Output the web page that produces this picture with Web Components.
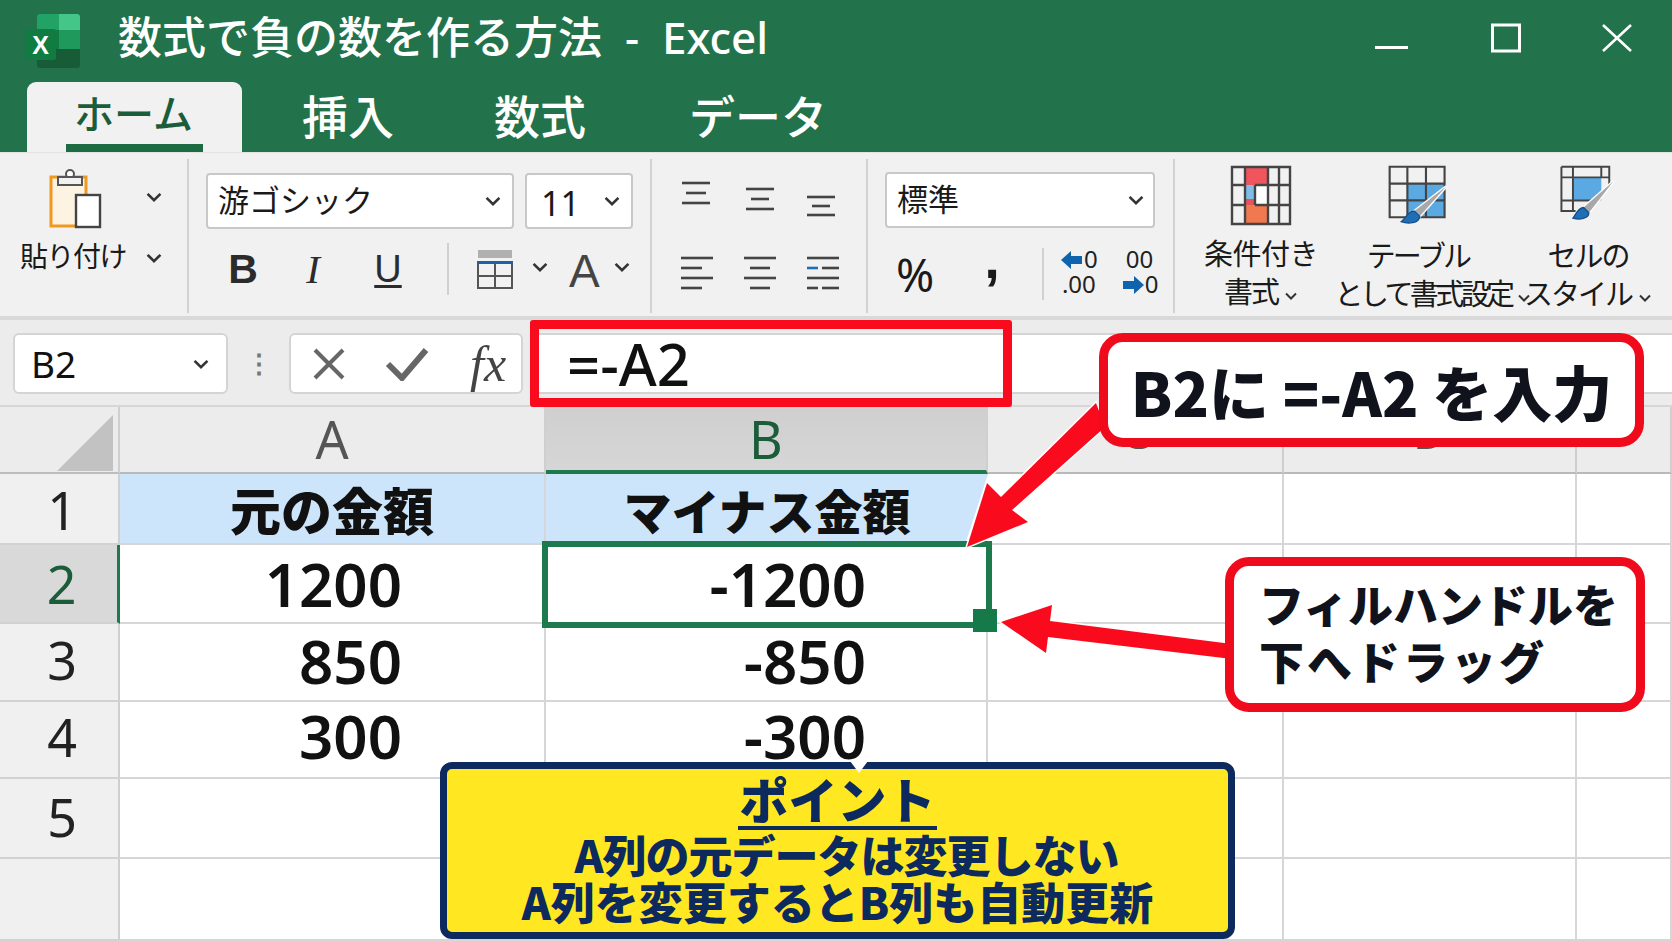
<!DOCTYPE html>
<html lang="ja">
<head>
<meta charset="utf-8">
<title>Excel</title>
<style>
  html, body { margin: 0; height: 100%; overflow: hidden; background: #fff; }
  body { font-family: "Noto Sans", "Noto Sans CJK JP", sans-serif; color: #111; }
</style>
</head>
<body>
<excel-app>
  <title-bar slot="top">数式で負の数を作る方法  -  Excel</title-bar>
  <ribbon-tabs slot="top"></ribbon-tabs>
  <ribbon-panel slot="top"></ribbon-panel>
  <formula-bar slot="top"></formula-bar>
  <sheet-grid slot="top"></sheet-grid>

  <red-arrows></red-arrows>
  <formula-mark></formula-mark>
  <call-out style="left:1099px;top:333px;width:545px;height:114px;font-size:60px;justify-content:center">B2に =-A2 を入力</call-out>
  <call-out style="left:1225px;top:557px;width:420px;height:155px;font-size:45px;padding:0 0 5px 25px;line-height:57px">フィルハンドルを<br><span style="letter-spacing:3px">下へドラッグ</span></call-out>
  <point-box>
    <span slot="head">ポイント</span>
    <span style="letter-spacing:-1px;margin-left:18px">A列の元データは変更しない</span><br>A列を変更するとB列も自動更新
  </point-box>
</excel-app>

<script>
const JP = '"Noto Sans CJK JP", sans-serif';
const LATIN_JP = '"Noto Sans", "Noto Sans CJK JP", sans-serif';

const chevron = (size = 14) => `<svg width="${size}" height="${size}" viewBox="0 0 14 14" fill="none" stroke="#333" stroke-width="2"><polyline points="2 4.5 7 9.5 12 4.5"/></svg>`;

// small blue arrow of the decimal buttons
const decArrow = dir => `<svg width="24" height="20" viewBox="0 0 24 20" fill="#0f62ac" style="vertical-align:-2px"><path d="${dir === 'left' ? 'M1 10 11 1v5h11v8H11v5z' : 'M23 10 13 1v5H2v8h11v5z'}"/></svg>`;

// three or four strokes used by the alignment buttons
function alignIcon(lines) {
  const body = lines.map(l => `<line x1="${l[0]}" x2="${l[1]}" y1="${l[2]}" y2="${l[2]}" stroke="${l[3] || '#444'}"/>`).join('');
  return `<svg width="34" height="34" viewBox="0 0 34 34" stroke-width="2.6">${body}</svg>`;
}

class ExcelApp extends HTMLElement {
  constructor() {
    super();
    this.attachShadow({ mode: 'open' });
    this.shadowRoot.innerHTML = `
      <style>
        :host { display: block; position: relative; width: 1672px; height: 941px; overflow: hidden; background: #fff; }
        .stack { display: flex; flex-direction: column; height: 100%; }
      </style>
      <div class="stack"><slot name="top"></slot></div>
      <slot></slot>
    `;
  }
}

class TitleBar extends HTMLElement {
  constructor() {
    super();
    this.attachShadow({ mode: 'open' });
    this.shadowRoot.innerHTML = `
      <style>
        :host { display: flex; align-items: center; height: 82px; background: #22734b; color: #fff; flex: none; }
        .logo { margin-left: 25px; width: 55px; height: 54px; flex: none; }
        .logo text { font: 700 25px "Liberation Sans", sans-serif; }
        .name { margin-left: 38px; font: 500 44px/1 ${LATIN_JP}; white-space: pre; padding-bottom: 8px; }
        .win { margin-left: auto; display: flex; align-items: center; padding-right: 40px; padding-bottom: 6px; }
        .win svg { display: block; }
      </style>
      <svg class="logo" viewBox="0 0 55 54">
        <path d="M16 0h36a3 3 0 0 1 3 3v13H34V0z" fill="#43c688"/>
        <path d="M15 0h19v16H12V3a3 3 0 0 1 3-3z" fill="#21a366"/>
        <rect x="12" y="16" width="22" height="19" fill="#107c41"/>
        <rect x="34" y="16" width="21" height="19" fill="#1f9a5c"/>
        <path d="M12 35h43v16a3 3 0 0 1-3 3H15a3 3 0 0 1-3-3z" fill="#185c37"/>
        <rect x="0" y="15" width="31" height="31" rx="2" fill="#107c41"/>
        <text x="15.5" y="40" fill="#fff" text-anchor="middle">X</text>
      </svg>
      <span class="name"><slot></slot></span>
      <div class="win">
        <svg width="33" height="4" style="margin-top:20px"><rect width="33" height="3" fill="#fff"/></svg>
        <svg width="30" height="30" style="margin-left:83px" fill="none" stroke="#fff" stroke-width="3"><rect x="1.5" y="2" width="27" height="26"/></svg>
        <svg width="30" height="30" style="margin-left:81px" fill="none" stroke="#fff" stroke-width="2.6"><path d="M1 2 29 28M29 2 1 28"/></svg>
      </div>
    `;
  }
}

class RibbonTabs extends HTMLElement {
  constructor() {
    super();
    this.attachShadow({ mode: 'open' });
    this.shadowRoot.innerHTML = `
      <style>
        :host { display: flex; height: 70px; background: #22734b; flex: none; padding-left: 27px; }
        .tab { font: 500 46px/1 ${JP}; color: #fff; padding-top: 9px; white-space: nowrap; }
        .on {
          width: 215px; height: 70px; box-sizing: border-box; background: #f1f1f1; color: #1b5c3a;
          border-radius: 9px 9px 0 0; text-align: center; position: relative;
          font-size: 40px; padding-right: 2px; padding-top: 10px;
        }
        .on::after { content: ""; position: absolute; left: 39px; bottom: 0; width: 137px; height: 8px; background: #1c6b43; }
      </style>
      <div class="tab on">ホーム</div>
      <div class="tab" style="margin-left:60px">挿入</div>
      <div class="tab" style="margin-left:100px">数式</div>
      <div class="tab" style="margin-left:103px">データ</div>
    `;
  }
}

class RibbonPanel extends HTMLElement {
  constructor() {
    super();
    this.attachShadow({ mode: 'open' });
    this.shadowRoot.innerHTML = `
      <style>
        :host { display: flex; height: 168px; box-sizing: border-box; background: #f1f1f1; border-bottom: 4px solid #d9d9d9; border-top: 1px solid #e3e3e3; padding: 6px 0 3px; flex: none; color: #1a1a1a; font-family: ${JP}; }
        .group { border-right: 2px solid #d2d2d2; box-sizing: border-box; flex: none; height: 100%; }
        .clip { width: 189px; display: grid; grid-template-columns: 142px 1fr; grid-template-rows: 75px 50px; padding-top: 9px; }
        .clip .ic { padding-left: 49px; }
        .clip .lab { font-size: 28px; line-height: 50px; padding-left: 20px; white-space: nowrap; margin-top: -13px; letter-spacing: -1.5px; }
        .clip .ch { padding: 19px 0 0 3px; }
        .clip .ch.b { padding-top: 0; margin-top: -12px; }
        .font { width: 463px; padding: 14px 0 0 17px; }
        .row { display: flex; align-items: center; }
        .box { display: flex; align-items: center; justify-content: space-between; background: #fff; border: 2px solid #c8c8c8; border-radius: 4px; box-sizing: border-box; height: 56px; padding: 0 10px; }
        .box .t { padding-bottom: 5px; }
        .row2 { margin-top: 18px; height: 44px; }
        .tool { width: 70px; text-align: center; color: #2b2b2b; }
        .b { font: 700 41px/44px "Liberation Sans", sans-serif; }
        .i { font: italic 400 41px/44px "Liberation Serif", serif; }
        .u { font: 400 38px/44px "Liberation Sans", sans-serif; text-decoration: underline; text-underline-offset: 3px; }
        .vsep { width: 2px; height: 52px; background: #d0d0d0; flex: none; }
        .align { width: 216px; display: grid; grid-template-columns: repeat(3, 63px); grid-template-rows: 76px 70px; padding: 21px 0 0 28px; }
        .num { width: 307px; padding: 13px 0 0 17px; }
        .styles { flex: 1; border: 0; display: flex; padding-left: 0; }
        .st { display: flex; flex-direction: column; align-items: center; font-size: 29px; line-height: 38px; white-space: nowrap; letter-spacing: -2px; flex: none; padding-top: 6px; }
        .st svg.main { display: block; height: 62px; margin-bottom: 6px; }
        .st .chev { margin-left: 6px; }
        .dec { font: 400 24px/25px "Noto Sans", sans-serif; color: #222; text-align: center; white-space: nowrap; flex: none; padding-bottom: 6px; }
      </style>

      <div class="group clip">
        <div class="ic">
          <svg width="54" height="62" viewBox="0 0 54 62">
            <path d="M2 9h35v49H2z" fill="#fdf3e2" stroke="#ef9a1e" stroke-width="3"/>
            <circle cx="21" cy="6" r="4" fill="#fff" stroke="#555" stroke-width="2"/>
            <rect x="9" y="9" width="24" height="8" fill="#f1f1f1" stroke="#555" stroke-width="2"/>
            <rect x="27" y="27" width="24" height="32" fill="#fff" stroke="#444" stroke-width="2.4"/>
          </svg>
        </div>
        <div class="ch">${chevron(18)}</div>
        <div class="lab">貼り付け</div>
        <div class="ch b">${chevron(18)}</div>
      </div>

      <div class="group font">
        <div class="row">
          <div class="box" style="width:308px;font-size:31px"><span class="t">游ゴシック</span> ${chevron(18)}</div>
          <div class="box" style="width:108px;margin-left:11px;font:400 34px 'Noto Sans',sans-serif;padding-left:14px"><span style="padding-top:4px">11</span> ${chevron(18)}</div>
        </div>
        <div class="row row2">
          <div class="tool b" style="margin-left:2px">B</div>
          <div class="tool i">I</div>
          <div class="tool u" style="margin-left:5px">U</div>
          <div class="vsep" style="margin-left:24px"></div>
          <svg width="38" height="40" viewBox="0 0 38 40" style="margin-left:27px">
            <rect x="2" y="1" width="34" height="8" fill="#b0b0b0"/>
            <rect x="1" y="12" width="36" height="3" fill="#1f5fa8"/>
            <path d="M2 15v24h34V15M2 27h34M19 15v24" fill="none" stroke="#555" stroke-width="2"/>
          </svg>
          <span style="margin-left:17px">${chevron(18)}</span>
          <span style="font:400 46px/44px 'Liberation Sans',sans-serif;color:#444;margin-left:20px;padding-top:3px">A</span>
          <span style="margin-left:13px">${chevron(18)}</span>
        </div>
      </div>

      <div class="group align">
        <div>${alignIcon([[2, 30, 3], [6, 26, 13], [2, 30, 23]])}</div>
        <div style="padding-top:6px">${alignIcon([[3, 31, 3], [8, 26, 13], [3, 31, 23]])}</div>
        <div style="padding-top:14px">${alignIcon([[1, 29, 3], [6, 24, 12], [1, 29, 21]])}</div>
        <div>${alignIcon([[1, 33, 2], [1, 22, 12], [1, 33, 22], [1, 22, 32]])}</div>
        <div>${alignIcon([[1, 33, 2], [7, 27, 12], [1, 33, 22], [7, 27, 32]])}</div>
        <div>${alignIcon([[1, 33, 2], [1, 12, 12, '#1f6fb8'], [16, 33, 12], [1, 33, 22], [1, 12, 32], [16, 33, 32]])}</div>
      </div>

      <div class="group num">
        <div class="box" style="width:270px;font-size:31px;padding-right:8px"><span class="t">標準</span> ${chevron(18)}</div>
        <div class="row" style="margin-top:16px;height:60px">
          <span style="font:400 46px/60px 'Noto Sans',sans-serif;width:60px;text-align:center;flex:none">%</span>
          <span style="font:700 56px/60px 'Liberation Sans',sans-serif;width:94px;text-align:center;height:36px;padding-bottom:54px;flex:none">,</span>
          <div class="vsep" style="margin-left:3px"></div>
          <div class="dec" style="margin-left:16px">${decArrow('left')}0<br>.00</div>
          <div class="dec" style="margin-left:23px">00<br>${decArrow('right')}0</div>
        </div>
      </div>

      <div class="group styles">
        <div class="st" style="width:150px;margin-left:11px">
          <svg class="main" width="62" height="62" viewBox="0 0 62 62">
            <rect x="15" y="2" width="23" height="18" fill="#f0545c"/>
            <rect x="15" y="20" width="10" height="20" fill="#7fbde8"/>
            <rect x="15" y="34" width="10" height="6" fill="#e8525a"/>
            <rect x="15" y="40" width="23" height="19" fill="#f0794f"/>
            <rect x="25" y="20" width="13" height="20" fill="#fff"/>
            <path d="M2 2h58v57H2zM2 20h13M25 20h35M2 40h13M25 40h35M15 2v57M38 2v57M49 2v57M25 20v20" fill="none" stroke="#444" stroke-width="2.4"/>
          </svg>
          <span style="letter-spacing:-.5px">条件付き</span>
          <span>書式<span class="chev">${chevron(14)}</span></span>
        </div>
        <div class="st" style="width:170px;margin-left:-3px">
          <svg class="main" width="68" height="70" viewBox="0 0 68 70" style="margin-bottom:8px">
            <rect x="22" y="21" width="42" height="38" fill="#5aa9e3"/>
            <path d="M2 2h62v57H2zM2 21h62M2 40h62M22 2v57M43 2v57" fill="none" stroke="#444" stroke-width="2.4"/>
            <path d="M66 24 30 52l6 6z" fill="#a8a8a8" stroke="#fff" stroke-width="3" paint-order="stroke"/>
            <path d="M30 52c-8 0-9 8-15 12 8 3 20 2 21-6z" fill="#1f6fb8" stroke="#14508a" stroke-width="1.5"/>
          </svg>
          <span style="letter-spacing:-3px">テーブル</span>
          <span style="margin-left:30px;letter-spacing:-3.6px">として書式設定<span class="chev">${chevron(14)}</span></span>
        </div>
        <div class="st" style="width:118px;margin-left:26px">
          <svg class="main" width="62" height="70" viewBox="0 0 62 70" style="margin-bottom:8px">
            <rect x="14" y="14" width="32" height="26" fill="#5aa9e3"/>
            <path d="M1 2h54v23M1 2v50h16M1 14h54M14 2v50M1 40h16M46 2v12M14 40h24" fill="none" stroke="#444" stroke-width="2.2"/>
            <path d="M60 18 26 48l6 6z" fill="#a8a8a8" stroke="#fff" stroke-width="3" paint-order="stroke"/>
            <path d="M26 48c-6 0-8 7-12 12 7 2 18 1 18-6z" fill="#1f6fb8" stroke="#14508a" stroke-width="1.5"/>
          </svg>
          <span>セルの</span>
          <span>スタイル<span class="chev">${chevron(14)}</span></span>
        </div>
      </div>
    `;
  }
}

class FormulaBar extends HTMLElement {
  constructor() {
    super();
    this.attachShadow({ mode: 'open' });
    this.shadowRoot.innerHTML = `
      <style>
        :host { display: flex; align-items: center; height: 87px; box-sizing: border-box; background: #ececec; padding: 2px 0 0 13px; flex: none; border-bottom: 2px solid #d6d6d6; }
        .cell { background: #fff; height: 61px; box-sizing: border-box; border: 2px solid #d4d4d4; display: flex; align-items: center; }
        .name { width: 215px; border-radius: 6px; padding: 0 16px; justify-content: space-between; font: 400 37px "Noto Sans", sans-serif; }
        .dots { width: 61px; text-align: center; color: #777; font: 700 26px/1 "Liberation Sans", sans-serif; }
        .btns { width: 234px; border-radius: 6px; padding-left: 21px; }
        .fx { font: italic 400 50px/1 "Liberation Serif", serif; color: #444; margin-left: 41px; }
        .input { margin-left: 12px; flex: 1; font: 500 58px "Noto Sans", sans-serif; padding-left: 30px; border-right: 0; }
      </style>
      <div class="cell name">B2 ${chevron(18)}</div>
      <div class="dots">⋮</div>
      <div class="cell btns">
        <svg width="34" height="34" fill="none" stroke="#666" stroke-width="4"><path d="M3 3 31 31M31 3 3 31"/></svg>
        <svg width="44" height="34" fill="none" stroke="#666" stroke-width="6" style="margin-left:39px"><path d="M3 17 17 31 41 3"/></svg>
        <span class="fx">fx</span>
      </div>
      <div class="cell input">=-A2</div>
    `;
  }
}

class SheetGrid extends HTMLElement {
  constructor() {
    super();
    this.attachShadow({ mode: 'open' });
    const rows = [
      ['1', '元の金額', 'マイナス金額', 70, 72],
      ['2', '1200', '-1200', 78, 78],
      ['3', '850', '-850', 74, 72],
      ['4', '300', '-300', 68, 70],
      ['5', '', '', 78, 76],
      ['', '', '', 78, 72]
    ];
    const cols = ['A', 'B', 'C', 'D', ''];
    let cells = '<div class="corner"><svg width="58" height="56"><path d="M56 0V56H0z" fill="#c2c2c2"/></svg></div>';
    cols.forEach(c => {
      const kind = c === 'B' ? 'sel' : (c === 'C' || c === 'D' ? 'hid' : '');
      cells += `<div class="ch ${kind}">${c}</div>`;
    });
    rows.forEach((r, i) => {
      cells += `<div class="rh ${i === 1 ? 'sel' : ''}" style="line-height:${r[4]}px">${r[0]}</div>`;
      const head = i === 0 ? ' head' : '';
      cells += `<div class="c a${head}" style="line-height:${r[3]}px">${r[1]}</div>`;
      cells += `<div class="c b${head} ${i === 1 ? 'active' : ''}" style="line-height:${r[3]}px">${r[2]}${i === 1 ? '<i class="handle"></i>' : ''}</div>`;
      cells += '<div class="c"></div><div class="c"></div><div class="c"></div>';
    });
    this.shadowRoot.innerHTML = `
      <style>
        :host { display: grid; flex: 1; isolation: isolate; grid-template-columns: 120px 426px 442px 296px 293px 95px; grid-template-rows: 67px 71px 79px 78px 77px 80px 1fr; background: #fff; min-height: 0; }
        .corner { background: #ececec; border-right: 2px solid #cfcfcf; border-bottom: 2px solid #bdbdbd; box-sizing: border-box; padding: 8px 0 0 57px; }
        .corner svg { display: block; }
        .ch { background: #ececec; border-right: 2px solid #cfcfcf; border-bottom: 2px solid #b9b9b9; box-sizing: border-box; text-align: center; font: 400 52px/64px "Noto Sans", sans-serif; color: #555; }
        .ch.sel { background: linear-gradient(#cfcfcf, #d6d6d6); color: #1b5c3a; border-bottom: 4px solid #1c7a4c; }
        .ch.hid { font-size: 46px; line-height: 48px; }
        .rh { background: #f0f0f0; border-right: 2px solid #cfcfcf; border-bottom: 2px solid #d2d2d2; box-sizing: border-box; text-align: center; font: 400 52px/72px "Noto Sans", sans-serif; color: #222; padding-left: 6px; }
        .rh.sel { background: #d9d9d9; color: #1b5c3a; border-right: 3px solid #1c7a4c; }
        .c { border-right: 2px solid #d6d6d6; border-bottom: 2px solid #d6d6d6; box-sizing: border-box; font: 600 60px/78px "Noto Sans", sans-serif; color: #111; text-align: right; white-space: nowrap; position: relative; }
        .a { padding-right: 142px; }
        .b { padding-right: 120px; }
        .head { background: #cde5fb; font: 900 51px/70px ${JP}; text-align: center; padding-right: 0; }
        .b.head { padding-right: 0; font-size: 48px; clip-path: polygon(0 0, 100% 0, 419px 100%, 0 100%); border: 0; }
        .active { outline: 6px solid #1c7a4c; outline-offset: -2px; z-index: 1; background: #fff; }
        .handle { position: absolute; right: -11px; bottom: -10px; width: 24px; height: 23px; background: #15794a; }
      </style>
      ${cells}
    `;
  }
}

// thick red box drawn over the formula input
class FormulaMark extends HTMLElement {
  constructor() {
    super();
    this.attachShadow({ mode: 'open' });
    this.shadowRoot.innerHTML = `
      <style>
        :host { display: block; position: absolute; left: 530px; top: 320px; width: 482px; height: 87px; box-sizing: border-box; border: 9px solid #f90a1d; border-radius: 3px; }
      </style>
    `;
  }
}

class RedArrows extends HTMLElement {
  constructor() {
    super();
    this.attachShadow({ mode: 'open' });
    this.shadowRoot.innerHTML = `
      <style>
        :host { display: block; position: absolute; left: 0; top: 0; width: 1672px; height: 941px; pointer-events: none; }
        svg { display: block; }
        polygon { fill: #f90a1d; stroke: #fff; stroke-width: 3; stroke-linejoin: miter; paint-order: stroke; }
      </style>
      <svg width="1672" height="941">
        <polygon points="967,547 987,483 1001,497 1096,403 1105,427 1012,510 1028,522"/>
        <polygon points="1001,622 1052,605 1050,621 1232,644 1232,659 1048,637 1046,653"/>
      </svg>
    `;
  }
}

class CallOut extends HTMLElement {
  constructor() {
    super();
    this.attachShadow({ mode: 'open' });
    this.shadowRoot.innerHTML = `
      <style>
        :host { display: flex; align-items: center; position: absolute; box-sizing: border-box; background: #fff; border: 9px solid #f00b1c; border-radius: 24px; font-family: ${JP}; font-weight: 900; color: #10121c; white-space: nowrap; }
      </style>
      <div><slot></slot></div>
    `;
  }
}

class PointBox extends HTMLElement {
  constructor() {
    super();
    this.attachShadow({ mode: 'open' });
    this.shadowRoot.innerHTML = `
      <style>
        :host { display: block; position: absolute; left: 440px; top: 762px; width: 795px; height: 177px; box-sizing: border-box; background: #ffe822; border: 7px solid #0d2a5e; border-radius: 12px; text-align: center; color: #0d2a5e; font-family: ${JP}; font-weight: 900; white-space: nowrap; }
        .head { display: inline-block; font-size: 49px; line-height: 56px; border-bottom: 4px solid #0d2a5e; margin-top: 1px; padding: 0 1px; }
        .body { font-size: 44px; line-height: 47px; margin-top: 1px; }
        .nick { position: absolute; left: 403px; top: -8px; width: 0; height: 0; border-left: 9px solid transparent; border-right: 9px solid transparent; border-top: 12px solid #fff; }
      </style>
      <span class="nick"></span>
      <div><span class="head"><slot name="head"></slot></span></div>
      <div class="body"><slot></slot></div>
    `;
  }
}

customElements.define('excel-app', ExcelApp);
customElements.define('title-bar', TitleBar);
customElements.define('ribbon-tabs', RibbonTabs);
customElements.define('ribbon-panel', RibbonPanel);
customElements.define('formula-bar', FormulaBar);
customElements.define('sheet-grid', SheetGrid);
customElements.define('formula-mark', FormulaMark);
customElements.define('red-arrows', RedArrows);
customElements.define('call-out', CallOut);
customElements.define('point-box', PointBox);
</script>
</body>
</html>
